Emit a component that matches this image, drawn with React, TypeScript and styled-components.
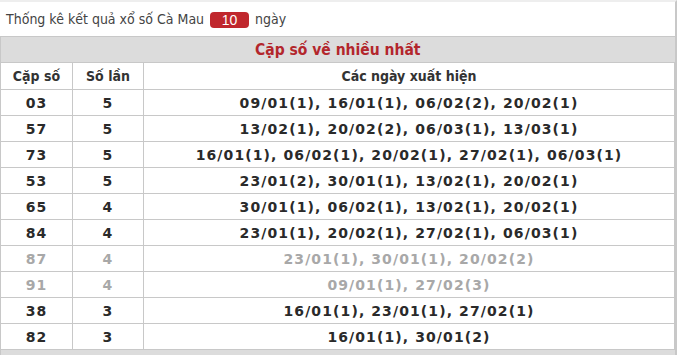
import React from "react";
import styled, { createGlobalStyle } from "styled-components";

interface Row {
    pair: string;
    count: number;
    dates: string;
    faded?: boolean;
}

const rows: Row[] = [
    { pair: "03", count: 5, dates: "09/01(1), 16/01(1), 06/02(2), 20/02(1)" },
    { pair: "57", count: 5, dates: "13/02(1), 20/02(2), 06/03(1), 13/03(1)" },
    { pair: "73", count: 5, dates: "16/01(1), 06/02(1), 20/02(1), 27/02(1), 06/03(1)" },
    { pair: "53", count: 5, dates: "23/01(2), 30/01(1), 13/02(1), 20/02(1)" },
    { pair: "65", count: 4, dates: "30/01(1), 06/02(1), 13/02(1), 20/02(1)" },
    { pair: "84", count: 4, dates: "23/01(1), 20/02(1), 27/02(1), 06/03(1)" },
    { pair: "87", count: 4, dates: "23/01(1), 30/01(1), 20/02(2)", faded: true },
    { pair: "91", count: 4, dates: "09/01(1), 27/02(3)", faded: true },
    { pair: "38", count: 3, dates: "16/01(1), 23/01(1), 27/02(1)" },
    { pair: "82", count: 3, dates: "16/01(1), 30/01(2)" }
];

const GlobalStyle = createGlobalStyle`
body {
margin: 0;
background: #fff;
font-family: "DejaVu Sans", Verdana, sans-serif;
}
`;

const Frame = styled.div`
width: 677px;
height: 355px;
border-top: 2px solid #eeeeee;
border-right: 2px solid #c8c8c8;
box-sizing: border-box;
overflow: hidden;
display: flex;
flex-direction: column;
`;

const TopBar = styled.div`
flex-shrink: 0;
height: 35px;
display: flex;
align-items: center;
gap: 5px;
padding-left: 6px;
font-family: "DejaVu Sans Condensed", "DejaVu Sans", sans-serif;
font-size: 14px;
color: #444;
border-bottom: 1px solid #c8c8c8;
box-sizing: border-box;
`;

const DayBadge = styled.span`
display: inline-flex;
align-items: center;
justify-content: center;
width: 39px;
height: 16px;
margin: 2px 1px 0;
background: #c0272d;
color: #fff;
border-radius: 4px;
font-family: "Liberation Sans", Arial, sans-serif;
font-size: 14px;
`;

const Table = styled.table`
flex-shrink: 0;
width: 100%;
border-collapse: collapse;
border-left: 1px solid #c8c8c8;
table-layout: fixed;
`;

const Col = styled.col<{ $w?: number }>`
width: ${(p) => (p.$w ? p.$w + "px" : "auto")};
`;

const TitleCell = styled.th`
height: 25px;
padding: 0;
background: #dcdcdc;
color: #b3262c;
font-family: "DejaVu Sans Condensed", "DejaVu Sans", sans-serif;
font-size: 15.5px;
font-weight: bold;
text-align: center;
border-bottom: 1px solid #c8c8c8;
`;

const HeadCell = styled.th`
height: 26px;
padding: 0;
background: #fff;
color: #333;
font-family: "DejaVu Sans Condensed", "DejaVu Sans", sans-serif;
font-size: 14px;
font-weight: bold;
text-align: center;
border: 1px solid #c8c8c8;
border-top: none;
&:first-child {
border-left: none;
}
`;

const Cell = styled.td<{ $faded?: boolean }>`
height: 25px;
padding: 0;
text-align: center;
white-space: nowrap;
font-size: 14px;
font-weight: bold;
letter-spacing: 1.1px;
color: ${(p) => (p.$faded ? "#a8a8a8" : "#2a2a2a")};
border: 1px solid #c8c8c8;
&:first-child {
border-left: none;
}
`;

const Footer = styled.div`
flex: 1;
background: #dcdcdc;
border-left: 1px solid #c8c8c8;
`;

const App: React.FC = () => {
    return (
        <>
            <GlobalStyle />
            <Frame>
                <TopBar>
                    Thống kê kết quả xổ số Cà Mau <DayBadge>10</DayBadge> ngày
                </TopBar>
                <Table>
                    <colgroup>
                        <Col $w={72} />
                        <Col $w={71} />
                        <Col />
                    </colgroup>
                    <thead>
                        <tr>
                            <TitleCell colSpan={3}>Cặp số về nhiều nhất</TitleCell>
                        </tr>
                        <tr>
                            <HeadCell>Cặp số</HeadCell>
                            <HeadCell>Số lần</HeadCell>
                            <HeadCell>Các ngày xuất hiện</HeadCell>
                        </tr>
                    </thead>
                    <tbody>
                        {rows.map((row) => (
                            <tr key={row.pair}>
                                <Cell $faded={row.faded}>{row.pair}</Cell>
                                <Cell $faded={row.faded}>{row.count}</Cell>
                                <Cell $faded={row.faded}>{row.dates}</Cell>
                            </tr>
                        ))}
                    </tbody>
                </Table>
                <Footer />
            </Frame>
        </>
    );
};

export default App;
